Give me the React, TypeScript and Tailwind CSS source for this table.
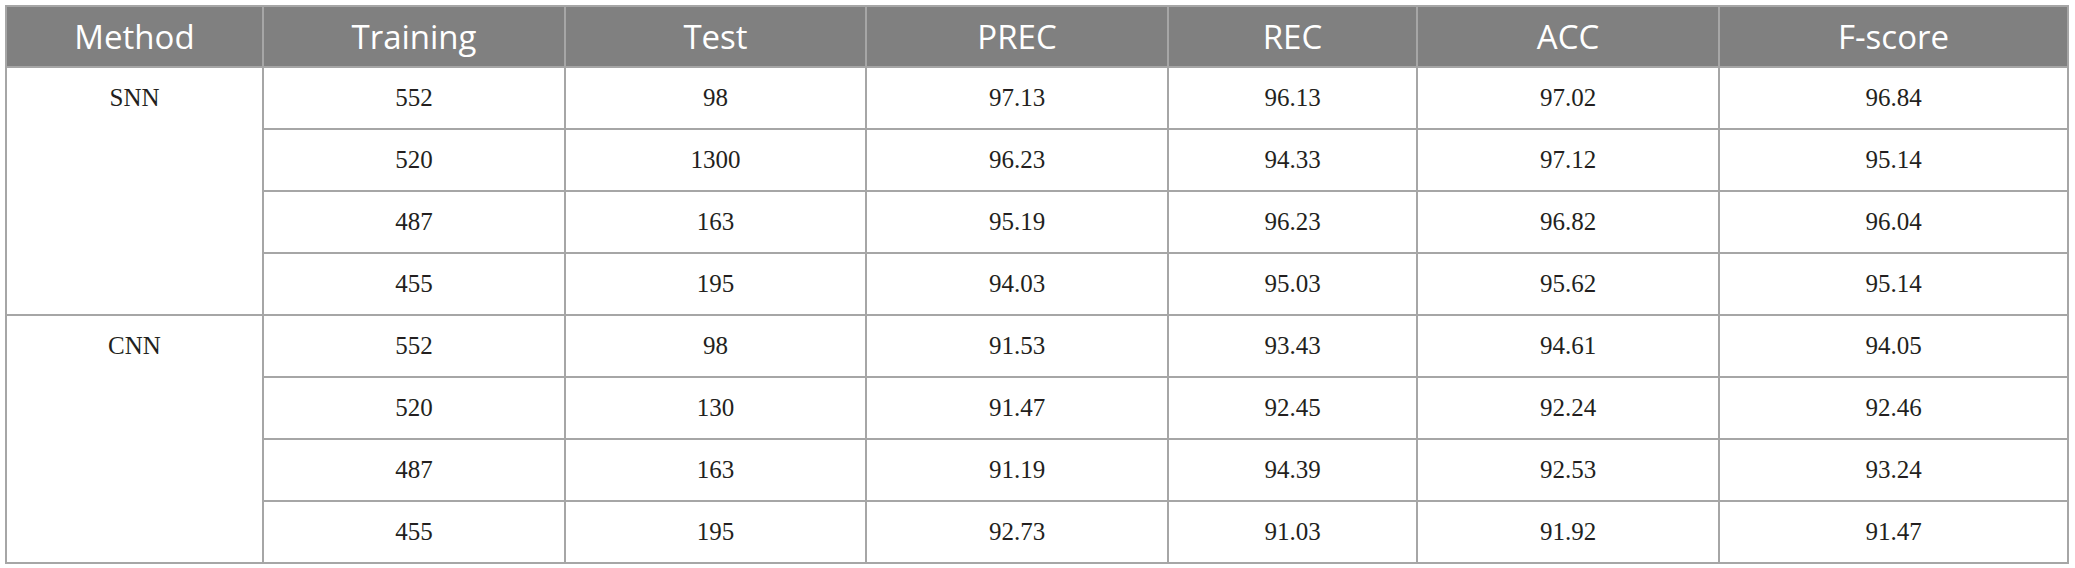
const headers = ['Method', 'Training', 'Test', 'PREC', 'REC', 'ACC', 'F-score']

const groups = [
  {
    method: 'SNN',
    rows: [
      ['552', '98', '97.13', '96.13', '97.02', '96.84'],
      ['520', '1300', '96.23', '94.33', '97.12', '95.14'],
      ['487', '163', '95.19', '96.23', '96.82', '96.04'],
      ['455', '195', '94.03', '95.03', '95.62', '95.14'],
    ],
  },
  {
    method: 'CNN',
    rows: [
      ['552', '98', '91.53', '93.43', '94.61', '94.05'],
      ['520', '130', '91.47', '92.45', '92.24', '92.46'],
      ['487', '163', '91.19', '94.39', '92.53', '93.24'],
      ['455', '195', '92.73', '91.03', '91.92', '91.47'],
    ],
  },
]

const colWidths = ['w-[257px]', 'w-[302px]', 'w-[301px]', 'w-[302px]', 'w-[249px]', 'w-[302px]', 'w-[349px]']

export default function App() {
  return (
    <div className="bg-white w-[2075px] h-[568px] pt-[5px] pl-[5px]">
      <table className="table-fixed border-collapse border-2 border-[#a6a6a6] w-[2064px]">
        <colgroup>
          {colWidths.map((w, i) => (
            <col key={i} className={w} />
          ))}
        </colgroup>
        <thead>
          <tr className="bg-[#808080]">
            {headers.map((h) => (
              <th
                key={h}
                className="h-[61px] border-2 border-[#a6a6a6] text-center align-middle font-normal text-white text-[33px] leading-none font-['Open_Sans',sans-serif]"
              >
                {h}
              </th>
            ))}
          </tr>
        </thead>
        <tbody className="text-[#231f20] text-[25px] font-['Liberation_Serif',serif]">
          {groups.map((g) =>
            g.rows.map((r, ri) => (
              <tr key={g.method + ri}>
                {ri === 0 && (
                  <td rowSpan={4} className="border-2 border-[#a6a6a6] align-top p-0">
                    <div className="h-[60px] flex items-center justify-center">{g.method}</div>
                  </td>
                )}
                {r.map((v, ci) => (
                  <td key={ci} className="h-[62px] border-2 border-[#a6a6a6] text-center align-middle p-0">
                    {v}
                  </td>
                ))}
              </tr>
            ))
          )}
        </tbody>
      </table>
    </div>
  )
}
